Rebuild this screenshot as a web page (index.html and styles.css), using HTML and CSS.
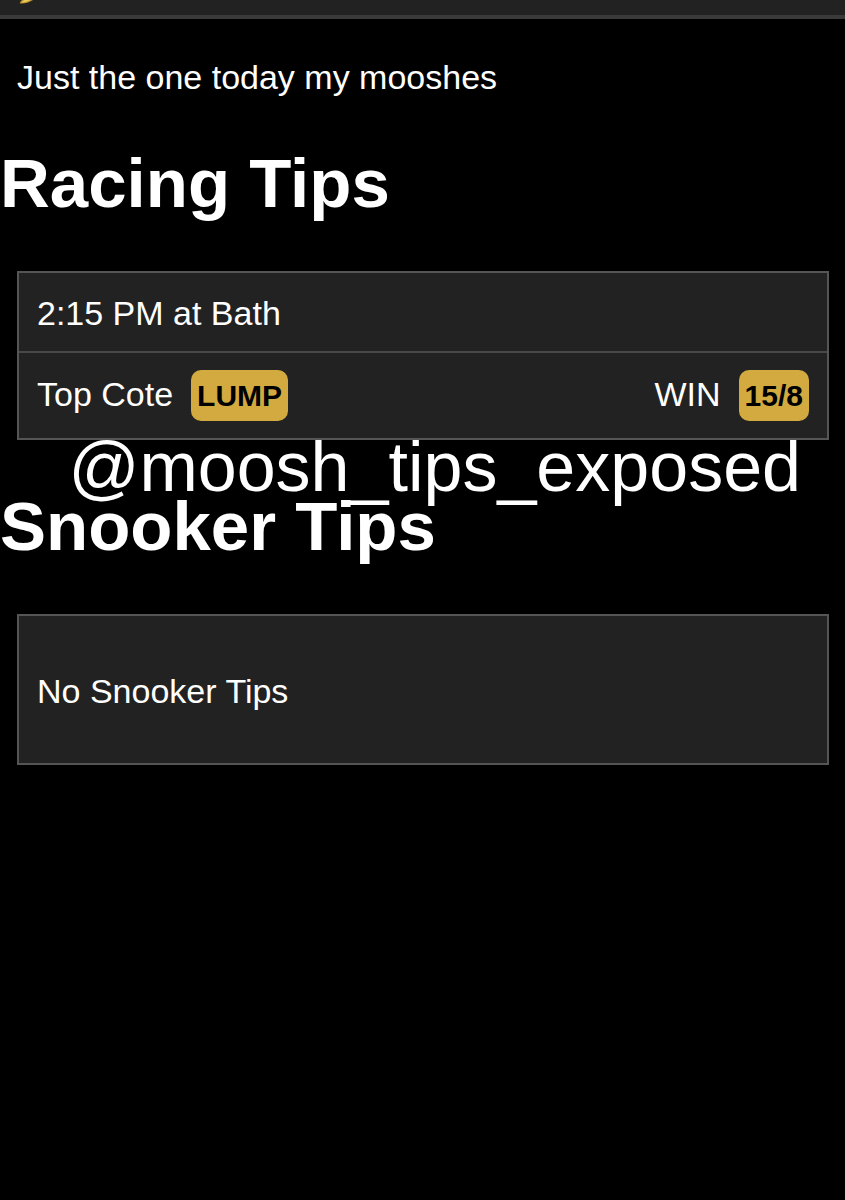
FILE: index.html
```html
<!DOCTYPE html>
<html lang="en">
<head>
<meta charset="utf-8">
<meta name="viewport" content="width=device-width, initial-scale=1">
<title>Racing Tips</title>
<link rel="stylesheet" href="styles.css">
</head>
<body>
<header class="topbar">
  <svg class="logo" width="20" height="5" viewBox="0 0 20 5" aria-hidden="true">
    <path d="M3 0H14Q8 4 1 3.5Q0 3 3 0Z" fill="#b58d2d"/>
    <path d="M5 0H12Q7 2.5 2 3Z" fill="#e9ca59"/>
  </svg>
</header>
<main>
  <p class="intro">Just the one today my mooshes</p>
  <section class="section">
    <h1 class="heading">Racing Tips</h1>
    <div class="card">
      <div class="race">2:15 PM at Bath</div>
      <div class="tip">
        <span>Top Cote</span>
        <span class="badge">LUMP</span>
        <span class="market">WIN</span>
        <span class="badge">15/8</span>
      </div>
    </div>
    <div class="handle">@moosh_tips_exposed</div>
  </section>
  <section class="section">
    <h1 class="heading">Snooker Tips</h1>
    <div class="card">
      <p class="empty">No Snooker Tips</p>
    </div>
  </section>
</main>
</body>
</html>
```
FILE: styles.css
```css
* {
  box-sizing: border-box;
}

body {
  margin: 0;
  background: #000;
  color: #fff;
  font: 34px/40px "Liberation Sans", Arial, sans-serif;
}

.topbar {
  display: flex;
  align-items: flex-start;
  height: 19px;
  padding-left: 19px;
  background: #222;
  border-bottom: 4px solid #3a3a3a;
}

.intro {
  margin: 0;
  padding: 38px 17px 0;
}

.section {
  position: relative;
  padding-top: 47px;
}

.heading {
  margin: 0 0 47px;
  font-size: 69px;
  line-height: 80px;
}

.card {
  margin: 0 16px 0 17px;
  background: #222;
  border: 2px solid #555;
}

.race {
  padding: 20px 18px 18px;
  border-bottom: 2px solid #484848;
}

.tip {
  display: flex;
  align-items: baseline;
  gap: 18px;
  padding: 17px 18px;
}

.market {
  margin-left: auto;
}

.badge {
  padding: 0 6px;
  border-radius: 10px;
  background: #d2aa40;
  color: #000;
  font-size: 30px;
  font-weight: bold;
  line-height: 51px;
}

.handle {
  position: absolute;
  right: 44px;
  bottom: -67px;
  z-index: 1;
  font-size: 70px;
  line-height: 80px;
}

.empty {
  margin: 0;
  padding: 55px 18px 52px;
}
```
